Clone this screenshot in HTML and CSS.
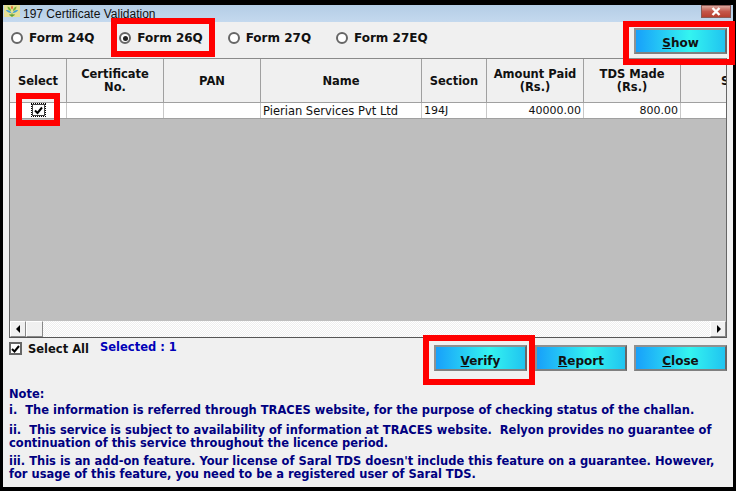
FILE: index.html
```html
<!DOCTYPE html>
<html lang="en">
<head>
<meta charset="utf-8">
<title>197 Certificate Validation</title>
<link rel="stylesheet" href="styles.css">
</head>
<body>
<div class="window">
  <div class="titlebar">
    <svg class="app-icon" width="16" height="12" viewBox="0 0 16 12"><rect width="16" height="12" fill="#e6df94"/><path d="M8 4.500C6.800 3.200 6.800 1.600 8 .5c1.200 1.100 1.200 2.700 0 4z" fill="#e8642c"/><path d="M7 6C5 5.500 3.500 4 3.500 1.500 5.500 2 7 3.500 7 6zM9 6c2-.5 3.500-2 3.500-4.500C10.500 2 9 3.500 9 6z" fill="#7cb53a"/><path d="M7.500 8C5 8 3 7 1.800 5c2.500-.3 4.700.7 5.700 3zM8.500 8c2.500 0 4.500-1 5.700-3-2.500-.3-4.700.7-5.700 3z" fill="#3f9fd8"/><path d="M8 12V8.500M5.500 9.500 8 11l2.500-1.500" stroke="#5ea23a" stroke-width="1.300" fill="none"/></svg>
    <span class="title">197 Certificate Validation</span>
    <div class="close-btn"><svg width="14" height="9" viewBox="0 0 14 9"><path d="M3.500 1l7 7M10.500 1l-7 7" stroke="#fff" stroke-width="2.400"/></svg></div>
  </div>
  <div class="content">
    <div class="top-row">
      <div class="radio-item"><span class="radio"></span>Form 24Q</div>
      <div class="radio-item"><span class="radio on"></span>Form 26Q</div>
      <div class="radio-item"><span class="radio"></span>Form 27Q</div>
      <div class="radio-item"><span class="radio"></span>Form 27EQ</div>
      <button class="btn show-btn"><u>S</u>how</button>
    </div>
    <div class="grid-box">
      <div class="grid-clip">
        <div class="grid-head">
          <div class="cell c-sel single">Select</div>
          <div class="cell c-cert">Certificate<br>No.</div>
          <div class="cell c-pan single">PAN</div>
          <div class="cell c-name single">Name</div>
          <div class="cell c-sec single">Section</div>
          <div class="cell c-amt">Amount Paid<br>(Rs.)</div>
          <div class="cell c-tds">TDS Made<br>(Rs.)</div>
          <div class="cell c-last single">S</div>
        </div>
        <div class="grid-row">
          <div class="rcell c-sel"><span class="row-check"><svg width="9" height="9" viewBox="0 0 9 9"><path d="M1 4.500l2.500 2.500L8 1.500" stroke="#000" stroke-width="2" fill="none"/></svg></span></div>
          <div class="rcell c-cert"></div>
          <div class="rcell c-pan"></div>
          <div class="rcell c-name">Pierian Services Pvt Ltd</div>
          <div class="rcell c-sec">194J</div>
          <div class="rcell c-amt num">40000.00</div>
          <div class="rcell c-tds num">800.00</div>
          <div class="rcell c-last"></div>
        </div>
      </div>
      <div class="grid-empty"></div>
      <div class="scrollbar">
        <div class="arrow"><svg width="5" height="8" viewBox="0 0 5 8"><path d="M4 0v8L0 4z" fill="#000"/></svg></div>
        <div class="thumb"></div>
        <div class="track"></div>
        <div class="arrow"><svg width="5" height="8" viewBox="0 0 5 8"><path d="M1 0v8l4-4z" fill="#000"/></svg></div>
      </div>
    </div>
    <div class="action-row">
      <div class="select-all"><span class="check"><svg width="10" height="10" viewBox="0 0 9 9"><path d="M1 4.500l2.500 2.500L8 1.500" stroke="#000" stroke-width="2" fill="none"/></svg></span>Select All</div>
      <div class="selected">Selected : 1</div>
      <div class="buttons">
        <button class="btn btn-verify"><u>V</u>erify</button>
        <button class="btn btn-report"><u>R</u>eport</button>
        <button class="btn"><u>C</u>lose</button>
      </div>
    </div>
    <div class="notes">
      <p class="note-head">Note:</p>
      <p class="note-one">i.&nbsp; The information is referred through TRACES website, for the purpose of checking status of the challan.</p>
      <p>ii.&nbsp; This service is subject to availability of information at TRACES website.&nbsp; Relyon provides no guarantee of continuation of this service throughout the licence period.</p>
      <p>iii. This is an add-on feature. Your license of Saral TDS doesn't include this feature on a guarantee. However, for usage of this feature, you need to be a registered user of Saral TDS.</p>
    </div>
  </div>
  <div class="mark m-form"></div>
  <div class="mark m-check"></div>
  <div class="mark m-show"></div>
  <div class="mark m-verify"></div>
</div>
</body>
</html>
```

FILE: styles.css
```css
* { box-sizing: border-box; }
html, body { margin: 0; height: 100%; background: #000; overflow: hidden; }
body { font-family: "DejaVu Sans", Verdana, sans-serif; }
.window { height: 491px; padding: 5px 3px 4px; }

.titlebar {
  height: 17px;
  display: flex;
  align-items: center;
  background: linear-gradient(#b4cde6, #c4d9ee);
  color: #111;
  font-family: "Liberation Sans", Arial, sans-serif;
  font-size: 12px;
}
.app-icon { margin: 0 3px 0 1px; flex: none; align-self: flex-start; }
.title { flex: 1; }
.close-btn {
  width: 30px;
  height: 13px;
  align-self: flex-start;
  margin-right: 2px;
  background: linear-gradient(#dba69c, #c5574a 50%, #b8402f);
  border: 1px solid #8a5a55;
  display: flex;
  align-items: center;
  justify-content: center;
}

.content { height: 465px; background: #f0f0f0; padding: 0 6px; }

.top-row { height: 36px; display: flex; align-items: center; padding-bottom: 4px; font-size: 12px; font-weight: 700; }
.radio-item { width: 108.33px; display: flex; align-items: center; color: #111; height: 20px; }
.radio { width: 12px; height: 12px; border: 2px solid #666; border-radius: 50%; background: #fff; margin: 0 6px 0 2px; display: flex; align-items: center; justify-content: center; }
.radio.on::after { content: ""; width: 5px; height: 5px; border-radius: 50%; background: #222; }
.show-btn { margin-left: auto; margin-top: 5px; }

.btn {
  width: 93px;
  height: 26px;
  padding: 5px 0 0;
  background: linear-gradient(90deg, #18a0fa, #34f4f0 60%, #20c4f0);
  border: 2px solid;
  border-color: #909090 #666 #808080 #909090;
  font: 700 12px "DejaVu Sans", Verdana, sans-serif;
  color: #111;
}
.btn-verify { margin-right: 1px; }
.btn-report { width: 92px; }

.grid-box { height: 280px; border: 1px solid #8a8a8a; border-left-color: #666; border-right-color: #666; border-bottom-color: #555; display: flex; flex-direction: column; }
.grid-head, .grid-row { display: flex; }
.grid-clip { overflow: hidden; }
.grid-head { height: 44px; background: #f0f0f0; border-bottom: 1px solid #a0a0a0; font-size: 11.5px; font-weight: 700; color: #111; line-height: 13px; }
.cell { display: flex; align-items: center; justify-content: center; text-align: center; border-right: 1px solid #a0a0a0; flex: none; }
.cell.single { padding-top: 1px; }
.grid-row { height: 16px; background: #fff; border-bottom: 1px solid #a0a0a0; font-size: 11px; color: #111; line-height: 16px; }
.rcell { flex: none; border-right: 1px solid #c8c8c8; padding: 0 2px; white-space: nowrap; overflow: hidden; }
.c-sel { width: 57px; }
.c-cert { width: 97px; }
.c-pan { width: 97px; }
.c-name { width: 161px; }
.rcell.c-name { font-size: 11.5px; }
.c-sec { width: 65px; }
.c-amt { width: 97px; }
.c-tds { width: 97px; }
.c-last { flex: 1; min-width: 0; }
.cell.c-last { border-right: 0; justify-content: flex-start; padding-left: 40px; overflow: hidden; }
.rcell.c-last { border-right: 0; background: #fff; }
.num { text-align: right; }
.rcell.c-sel { display: flex; justify-content: center; align-items: center; padding: 0 0 1px; }
.row-check { width: 15px; height: 14px; border: 1px dotted #000; outline: 1px solid #fff; display: flex; align-items: center; justify-content: center; background: #fff; box-shadow: inset 0 0 0 1px #444; }

.grid-empty { flex: 1; background: #bebebe; }
.scrollbar { height: 16px; display: flex; background: repeating-conic-gradient(#fff 0 25%, #eee 0 50%) 0 0 / 2px 2px; }
.arrow { width: 16px; background: #f0f0f0; border: 1px solid; border-color: #fff #888 #888 #fff; display: flex; align-items: center; justify-content: center; flex: none; }
.thumb { width: 17px; background: #f0f0f0; border: 1px solid; border-color: #fff #888 #888 #fff; flex: none; }
.track { flex: 1; }

.action-row { display: flex; height: 50px; padding-top: 4px; font-size: 11.5px; font-weight: 700; }
.select-all { display: flex; align-items: flex-start; color: #111; width: 91px; }
.check { width: 13px; height: 13px; border: 2px solid #666; background: #fff; margin-right: 6px; display: flex; align-items: center; justify-content: center; flex: none; }
.selected { color: #0000b8; line-height: 11px; }
.buttons { margin-left: auto; display: flex; gap: 7px; padding-top: 3px; height: 29px; }

.notes { color: #000080; font-size: 11.47px; font-weight: 700; line-height: 13px; }
.notes p { margin: 0 0 5px; }
.notes .note-head { margin-bottom: 3px; }
.notes .note-one { margin-bottom: 7px; }

.mark { position: absolute; border: 6px solid #f00; pointer-events: none; }
.m-form { left: 111px; top: 18px; width: 104px; height: 39px; }
.m-check { left: 16px; top: 93px; width: 44px; height: 33px; }
.m-show { left: 623px; top: 21px; width: 112px; height: 44px; }
.m-verify { left: 423px; top: 335px; width: 112px; height: 50px; }
```
